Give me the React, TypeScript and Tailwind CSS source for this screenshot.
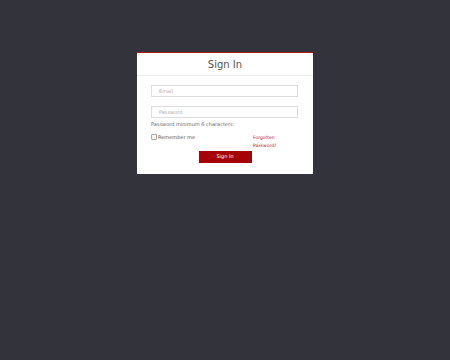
export default function App() {
	return (
		<div
			className="min-h-[360px] w-full bg-[#32333b] pt-[52px]"
			style={{ fontFamily: '"DejaVu Sans", sans-serif' }}
		>
			<div className="mx-auto w-[176px] border-t border-[#b01c1c] bg-white">
				<div className="flex h-[23px] items-center justify-center border-b border-[#eeeeee] pt-[1px]">
					<h1 className="text-[10px] leading-none text-[#555]">Sign In</h1>
				</div>

				<form className="px-[14px] pt-[9px] pb-[11px]">
					<input
						type="email"
						placeholder="Email"
						className="block h-[12px] w-[147px] border border-[#dddddd] px-[7px] text-[5px] text-[#444] placeholder-[#aaaaaa] outline-none"
					/>
					<input
						type="password"
						placeholder="Password"
						className="mt-[9px] block h-[12px] w-[147px] border border-[#dddddd] px-[7px] text-[5px] text-[#444] placeholder-[#aaaaaa] outline-none"
					/>
					<p className="mt-[2px] text-[5px] leading-[8px] text-[#666]">
						Password minimum 6 characters:
					</p>

					<div className="mt-[5px] flex">
						<label className="flex w-[102px] items-start gap-[1px] text-[5px] leading-[8px] text-[#555]">
							<span className="mt-[1px] inline-block h-[6px] w-[6px] rounded-[1px] border border-[#aaa] bg-[#f4f4f4]" />
							Remember me
						</label>
						<a className="mt-[1px] text-[4.5px] leading-[8px] text-[#c0141c]">
							Forgotten
							<br />
							Password?
						</a>
					</div>

					<div className="mt-[1px] flex justify-center">
						<button
							type="button"
							className="h-[12px] w-[53px] bg-[#a50306] text-[5px] text-white"
						>
							Sign In
						</button>
					</div>
				</form>
			</div>
		</div>
	);
}
